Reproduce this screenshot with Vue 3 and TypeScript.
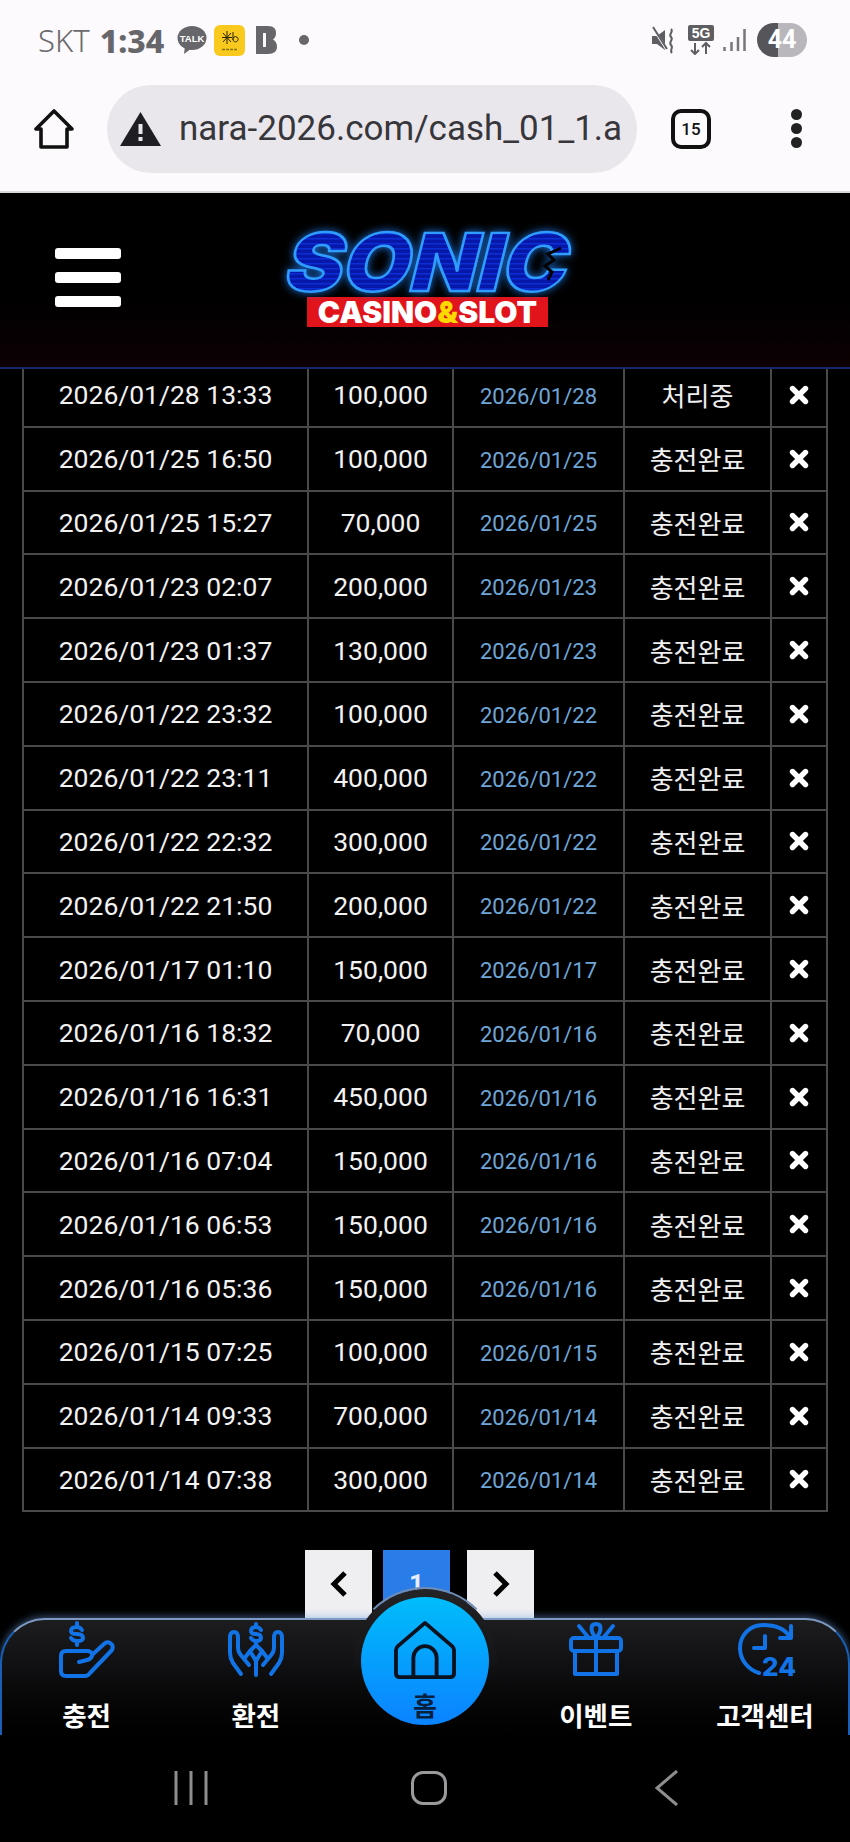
<script setup lang="ts">
const rows = [
  ['2026/01/28 13:33', '100,000', '2026/01/28', '처리중'],
  ['2026/01/25 16:50', '100,000', '2026/01/25', '충전완료'],
  ['2026/01/25 15:27', '70,000', '2026/01/25', '충전완료'],
  ['2026/01/23 02:07', '200,000', '2026/01/23', '충전완료'],
  ['2026/01/23 01:37', '130,000', '2026/01/23', '충전완료'],
  ['2026/01/22 23:32', '100,000', '2026/01/22', '충전완료'],
  ['2026/01/22 23:11', '400,000', '2026/01/22', '충전완료'],
  ['2026/01/22 22:32', '300,000', '2026/01/22', '충전완료'],
  ['2026/01/22 21:50', '200,000', '2026/01/22', '충전완료'],
  ['2026/01/17 01:10', '150,000', '2026/01/17', '충전완료'],
  ['2026/01/16 18:32', '70,000', '2026/01/16', '충전완료'],
  ['2026/01/16 16:31', '450,000', '2026/01/16', '충전완료'],
  ['2026/01/16 07:04', '150,000', '2026/01/16', '충전완료'],
  ['2026/01/16 06:53', '150,000', '2026/01/16', '충전완료'],
  ['2026/01/16 05:36', '150,000', '2026/01/16', '충전완료'],
  ['2026/01/15 07:25', '100,000', '2026/01/15', '충전완료'],
  ['2026/01/14 09:33', '700,000', '2026/01/14', '충전완료'],
  ['2026/01/14 07:38', '300,000', '2026/01/14', '충전완료'],
];
</script>

<template>
  <div class="page">
    <!-- Android status bar -->
    <div class="status">
      <div class="status-left">
        <span class="carrier">SKT</span>
        <span class="clock">1:34</span>
        <svg class="st-talk" width="30" height="28" viewBox="0 0 30 28">
          <ellipse cx="15" cy="12" rx="14.5" ry="12" fill="#67666b" />
          <path d="M8 20 L7 28 L15 22 Z" fill="#67666b" />
          <text x="15" y="15.5" text-anchor="middle" class="talk-text">TALK</text>
        </svg>
        <svg class="st-kb" width="31" height="31" viewBox="0 0 31 31">
          <rect width="31" height="31" rx="6" fill="#f9c91e" />
          <path d="M13 6V19M9 8L17 17M17 8L9 17M8 12.5H18" stroke="#2a2408" stroke-width="1" fill="none" />
          <path d="M19 7V15M19 13.5a2.6 2.6 0 1 0 5 0a2.6 2.6 0 0 0 -5 0" stroke="#2a2408" stroke-width="1" fill="none" />
          <path d="M8 24.5H24" stroke="#8a7414" stroke-width="1.6" stroke-dasharray="3 1" />
        </svg>
        <svg class="st-b" width="21" height="28" viewBox="0 0 21 28">
          <path d="M0 0H12C18 0 20 3 20 7C20 10 19 12 17 13.5C20 15 21 18 21 21C21 25 18 28 12 28H0Z" fill="#67666b" />
          <rect x="7" y="7" width="3" height="14" fill="#fcfafd" />
        </svg>
        <span class="st-dot"></span>
      </div>
      <div class="status-right">
        <svg width="24" height="28" viewBox="0 0 24 28">
          <path d="M0 10H5L13 4V24L5 18H0Z" fill="#5f5e63" />
          <path d="M1 2L15 24" stroke="#fcfafd" stroke-width="2.5" />
          <path d="M1 1L15 23" stroke="#5f5e63" stroke-width="2" />
          <path d="M19 3C22 6 16 8 19 11C22 14 16 16 19 19C22 22 17 24 20 27" stroke="#5f5e63" stroke-width="2" fill="none" />
        </svg>
        <svg class="st-5g" width="26" height="30" viewBox="0 0 26 30">
          <rect width="26" height="16" rx="2" fill="#5f5e63" />
          <text x="13" y="13" text-anchor="middle" class="g5-text">5G</text>
          <path d="M7 18V29M3 25L7 29L11 25M18 29V18M14 22L18 18L22 22" stroke="#5f5e63" stroke-width="2" fill="none" />
        </svg>
        <svg class="st-signal" width="23" height="24" viewBox="0 0 23 24">
          <path d="M1.5 19V23M8.5 14V23M15 9V23M21.5 1V23" stroke="#77767b" stroke-width="2.5" />
        </svg>
        <div class="battery">44</div>
      </div>
    </div>

    <!-- Chrome toolbar -->
    <div class="toolbar">
      <svg class="tb-home" width="40" height="40" viewBox="0 0 40 40">
        <path d="M20 2L2 20H7V38H33V20H38Z" fill="none" stroke="#111" stroke-width="3.6" stroke-linejoin="round" />
      </svg>
      <div class="urlbar">
        <svg width="41" height="34" viewBox="0 0 41 34">
          <path d="M20.5 0L41 34H0Z" fill="#1f1e22" />
          <path d="M20.5 12V22M20.5 25V29" stroke="#e9e7ec" stroke-width="4" />
        </svg>
        <span class="url">nara-2026.com/cash_01_1.a</span>
      </div>
      <div class="tabs">15</div>
      <div class="dots"><i></i><i></i><i></i></div>
    </div>

    <!-- Site header -->
    <header class="site-header">
      <div class="burger"><i></i><i></i><i></i></div>
      <div class="logo">
        <svg class="logo-top" width="296" height="66" viewBox="0 0 296 66">
          <defs>
            <pattern id="sonicLines" width="4" height="5" patternUnits="userSpaceOnUse">
              <rect width="4" height="5" fill="#0718a8" />
              <rect width="4" height="1.4" fill="#0b2fd8" />
            </pattern>
          </defs>
          <text x="0" y="63" transform="skewX(-14)" textLength="282" lengthAdjust="spacingAndGlyphs" class="logo-main" fill="url(#sonicLines)" dx="17">SONIC</text>
          <path d="M281 20L268 26L274 32L265 38L272 44L268 52" class="logo-notch" />
        </svg>
        <div class="logo-sub">CASINO<em>&amp;</em>SLOT</div>
      </div>
    </header>

    <main class="content">
      <div class="grid">
        <div v-for="row in rows" :key="row[0]" class="row">
          <div class="cell">{{ row[0] }}</div>
          <div class="cell">{{ row[1] }}</div>
          <div class="cell cell-date">{{ row[2] }}</div>
          <div class="cell cell-status">{{ row[3] }}</div>
          <div class="cell">
            <svg width="20" height="20" viewBox="0 0 20 20">
              <path d="M3.5 3.5L16.5 16.5M16.5 3.5L3.5 16.5" stroke="#fff" stroke-width="5.4" stroke-linecap="round" />
            </svg>
          </div>
        </div>
      </div>

      <div class="pager">
        <div class="pg-btn">
          <svg width="20" height="28" viewBox="0 0 20 28"><path d="M16 3L5 14L16 25" fill="none" stroke="#000" stroke-width="5" /></svg>
        </div>
        <div class="pg-btn pg-current">1</div>
        <div class="pg-btn pg-next">
          <svg width="20" height="28" viewBox="0 0 20 28"><path d="M4 3L15 14L4 25" fill="none" stroke="#000" stroke-width="5" /></svg>
        </div>
      </div>
    </main>

    <!-- Fixed bottom menu and Android keys -->
    <div class="dock">
      <nav class="tabbar">
        <div class="tab">
          <svg width="54" height="54" viewBox="0 0 54 54" class="tab-icon">
            <path d="M22 7Q20 4 17 4Q11 4 11 8Q11 11 17 11Q23 11 23 15Q23 18 17 18Q13 18 11 15M17 0V4M17 18V22" />
            <path d="M28 28H6Q1 28 1 33V48Q1 53 6 53H25Q28 53 30 50L52 27Q54 22 50 20Q47 18 44 21L32 32" />
            <path d="M28 28Q33 29 32 33Q31 36 27 37L19 39" />
          </svg>
          <span>충전</span>
        </div>
        <div class="tab">
          <svg width="54" height="54" viewBox="0 0 54 54" class="tab-icon">
            <path d="M32 7Q30 4 27 4Q22 4 22 8Q22 11 27 11Q32 11 32 15Q32 18 27 18Q24 18 22 15M27 1V4M27 18V21" />
            <path d="M12 51L4 40Q1 35 1 30V15Q1 9 5 9Q9 9 9 15V25Q9 28 11 31L20 42M21 28L15 36" />
            <path d="M42 51L50 40Q53 35 53 30V15Q53 9 49 9Q45 9 45 15V25Q45 28 43 31L34 42M33 28L39 36" />
            <path d="M27 52V38L21 28L27 22L33 28L27 38" />
          </svg>
          <span>환전</span>
        </div>
        <div class="tab tab-home">
          <div class="home-ring">
            <div class="home-btn">
              <svg width="62" height="60" viewBox="0 0 64 62">
                <path d="M32 3L4 27Q2 29 2 31V55Q2 59 6 59H58Q62 59 62 55V31Q62 29 60 27Z" fill="none" stroke="#0a1220" stroke-width="4" stroke-linejoin="round" />
                <path d="M20 59V39A12 12 0 0 1 44 39V59" fill="none" stroke="#0a1220" stroke-width="4" />
              </svg>
              <span class="home-label">홈</span>
            </div>
          </div>
        </div>
        <div class="tab tab-right">
          <svg width="54" height="54" viewBox="0 0 54 54" class="tab-icon">
            <rect x="2" y="15" width="50" height="13" rx="3" />
            <path d="M6 28V51H48V28M27 15V51" />
            <path d="M27 15C21 8 21 1 27 1C33 1 33 8 27 15M10 3L19 14M44 3L35 14" />
          </svg>
          <span>이벤트</span>
        </div>
        <div class="tab tab-right">
          <svg width="54" height="54" viewBox="0 0 54 54" class="tab-icon">
            <path d="M42 15H53V3M52 14C47 6 37 2 25 2C12 2 2 12 2 25C2 36 9 46 21 50" />
            <path d="M27 13V25H16" />
            <text x="24" y="53" class="icon-24">24</text>
          </svg>
          <span>고객센터</span>
        </div>
      </nav>
      <div class="sysnav">
        <svg width="34" height="34" viewBox="0 0 34 34"><path d="M2 0V34M17 0V34M32 0V34" stroke="#8e8e90" stroke-width="3" /></svg>
        <div class="sys-home"></div>
        <svg width="24" height="36" viewBox="0 0 24 36"><path d="M22 1L2 18L22 35" fill="none" stroke="#8e8e90" stroke-width="3" /></svg>
      </div>
    </div>
  </div>
</template>

<style>
html,
body {
  margin: 0;
  background: #000;
}
</style>

<style scoped>
.page {
  position: relative;
  width: 850px;
  height: 1842px;
  overflow: hidden;
  background: #000;
  display: flex;
  flex-direction: column;
  font-family: Roboto, "Noto Sans CJK KR", sans-serif;
}

/* ── Status bar ── */
.status {
  height: 80px;
  flex-shrink: 0;
  box-sizing: border-box;
  padding: 0 43px 0 38px;
  background: #fcfafd;
  display: flex;
  align-items: center;
  justify-content: space-between;
}
.status-left,
.status-right {
  display: flex;
  align-items: center;
}
.carrier {
  font-family: "Noto Sans", sans-serif;
  font-size: 31px;
  font-weight: 300;
  color: #6b6a6e;
}
.clock {
  margin-left: 10px;
  font-family: "Noto Sans", sans-serif;
  font-size: 32px;
  font-weight: 800;
  color: #67666b;
}
.st-talk { margin-left: 13px; }
.st-kb { margin-left: 7px; }
.st-b { margin-left: 11px; }
.st-dot {
  width: 10px;
  height: 10px;
  border-radius: 50%;
  background: #67666b;
  margin-left: 22px;
}
.talk-text {
  font-family: "Liberation Sans", sans-serif;
  font-size: 9.5px;
  font-weight: 700;
  fill: #fff;
}
.st-5g { margin-left: 12px; }
.g5-text {
  font-family: "Liberation Sans", sans-serif;
  font-size: 14px;
  font-weight: 700;
  fill: #fff;
}
.st-signal { margin-left: 9px; }
.battery {
  margin-left: 11px;
  width: 50px;
  height: 34px;
  border-radius: 17px;
  background: linear-gradient(90deg, #56555a 42%, #b9b7bb 42%);
  color: #fff;
  font-family: Roboto, sans-serif;
  font-size: 25px;
  font-weight: 700;
  line-height: 34px;
  text-align: center;
}

/* ── Browser toolbar ── */
.toolbar {
  height: 113px;
  flex-shrink: 0;
  box-sizing: border-box;
  background: #fcfafd;
  border-bottom: 2px solid #d9d8db;
  padding-bottom: 14px;
  display: flex;
  align-items: center;
}
.tb-home { margin-left: 34px; }
.urlbar {
  margin-left: 33px;
  width: 530px;
  height: 88px;
  border-radius: 44px;
  background: #e9e7ec;
  display: flex;
  align-items: center;
  box-sizing: border-box;
  padding-left: 13px;
}
.url {
  margin-left: 18px;
  font-size: 35px;
  color: #37363b;
  white-space: nowrap;
}
.tabs {
  margin-left: 34px;
  width: 40px;
  height: 40px;
  box-sizing: border-box;
  border: 4px solid #111;
  border-radius: 10px;
  font-size: 17px;
  font-weight: 500;
  line-height: 32px;
  text-align: center;
  color: #111;
}
.dots {
  margin-left: 80px;
  display: flex;
  flex-direction: column;
  gap: 3px;
}
.dots i {
  width: 11px;
  height: 11px;
  border-radius: 50%;
  background: #222;
}

/* ── Site header ── */
.site-header {
  position: relative;
  z-index: 1;
  height: 176px;
  flex-shrink: 0;
  box-sizing: border-box;
  padding-bottom: 6px;
  background: linear-gradient(#000 60%, #0c0003);
  border-bottom: 2px solid #16276a;
  display: flex;
  align-items: center;
}
.burger {
  margin-left: 55px;
  display: flex;
  flex-direction: column;
  gap: 13px;
}
.burger i {
  display: block;
  width: 66px;
  height: 11px;
  border-radius: 3px;
  background: #fff;
}
.logo {
  margin-left: 159px;
  width: 296px;
}
.logo-top {
  display: block;
  overflow: visible;
  filter: drop-shadow(0 0 4px rgba(30, 130, 255, 0.85));
}
.logo-main {
  font-family: Inter, sans-serif;
  font-size: 80px;
  font-weight: 900;
  stroke: #2f9dff;
  stroke-width: 2.4px;
}
.logo-notch {
  fill: none;
  stroke: #000;
  stroke-width: 3px;
}
.logo-sub {
  margin: 3px 0 0 27px;
  width: 241px;
  height: 30px;
  background: #e1141c;
  color: #fff;
  font-family: Inter, sans-serif;
  font-size: 30px;
  font-weight: 900;
  line-height: 30px;
  text-align: center;
  white-space: nowrap;
}
.logo-sub em {
  font-style: normal;
  color: #ffd800;
}

/* ── Table ── */
.content {
  margin-top: -5px;
  padding: 0 22px;
}
.grid {
  border-left: 2px solid #4a4a4c;
  width: 806px;
  box-sizing: border-box;
}
.row {
  display: grid;
  grid-template-columns: 285px 145px 171px 147px 56px;
  height: 63.8px;
  box-sizing: border-box;
  border-bottom: 2.5px solid #4a4a4c;
}
.cell {
  display: flex;
  align-items: center;
  justify-content: center;
  box-sizing: border-box;
  border-right: 2.5px solid #4a4a4c;
  font-size: 26.5px;
  color: #f2f2f2;
  white-space: nowrap;
}
.cell-date {
  padding-top: 3px;
  font-size: 22px;
  color: #6ea6d8;
}
.cell-status {
  font-family: "Noto Sans CJK KR", sans-serif;
  font-size: 26px;
  color: #efefef;
}

/* ── Pagination ── */
.pager {
  margin-top: 38px;
  padding-left: 283px;
  display: flex;
}
.pg-btn {
  width: 67px;
  height: 68px;
  background: #efeff1;
  display: flex;
  align-items: center;
  justify-content: center;
}
.pg-current {
  margin-left: 11px;
  background: #2a7de8;
  color: #e6eefa;
  font-size: 26px;
  font-weight: 700;
}
.pg-next {
  margin-left: 17px;
}

/* ── Bottom menu ── */
.dock {
  position: absolute;
  left: 0;
  right: 0;
  bottom: 0;
  z-index: 2;
  background: #000;
}
.tabbar {
  position: relative;
  height: 117px;
  box-sizing: border-box;
  display: grid;
  grid-template-columns: repeat(5, 1fr);
  border: 2px solid;
  border-bottom: none;
  border-color: #7d9ac4 #1a5fb4;
  border-radius: 45px 45px 0 0;
  background: linear-gradient(#1d1d20, #050506 75%, #000);
  box-shadow: 0 -2px 7px rgba(110, 160, 230, 0.45);
}
.tab {
  display: flex;
  flex-direction: column;
  align-items: center;
  padding-top: 3px;
  color: #fff;
  font-family: "Noto Sans CJK KR", sans-serif;
  font-size: 26.5px;
  font-weight: 700;
  line-height: 36px;
}
.tab-right {
  padding-left: 3px;
}
.tab span {
  margin-top: 20px;
}
.tab-icon {
  flex-shrink: 0;
  fill: none;
  stroke: #1173e6;
  stroke-width: 4;
  stroke-linecap: round;
  stroke-linejoin: round;
  overflow: visible;
}
.icon-24 {
  font-family: Inter, sans-serif;
  font-size: 26px;
  font-weight: 800;
  fill: #1173e6;
  stroke: none;
}
.tab-home {
  position: relative;
  padding-top: 0;
}
.home-ring {
  position: absolute;
  top: -33px;
  left: 50%;
  margin-left: -74px;
  width: 148px;
  height: 148px;
  box-sizing: border-box;
  border-radius: 50%;
  border: 2px solid transparent;
  border-top-color: #6f8db6;
  background: linear-gradient(#242427, #1a1a1d 30%, transparent 60%) padding-box;
  display: flex;
  align-items: center;
  justify-content: center;
}
.home-btn {
  width: 128px;
  height: 128px;
  border-radius: 50%;
  background: linear-gradient(#00bdfb, #0b82ff);
  display: flex;
  flex-direction: column;
  align-items: center;
  box-sizing: border-box;
  padding-top: 23px;
}
.tab .home-label {
  margin-top: 8px;
  color: #08203f;
  font-size: 26px;
  font-weight: 700;
  line-height: 34px;
}
.sysnav {
  position: relative;
  height: 107px;
  box-sizing: border-box;
  padding: 0 64px 2px 72px;
  display: grid;
  grid-template-columns: repeat(3, 1fr);
  align-items: center;
  justify-items: center;
  background: #000;
}
.sys-home {
  width: 36px;
  height: 34px;
  box-sizing: border-box;
  border: 3.5px solid #9a9a9c;
  border-radius: 12px;
}
</style>
